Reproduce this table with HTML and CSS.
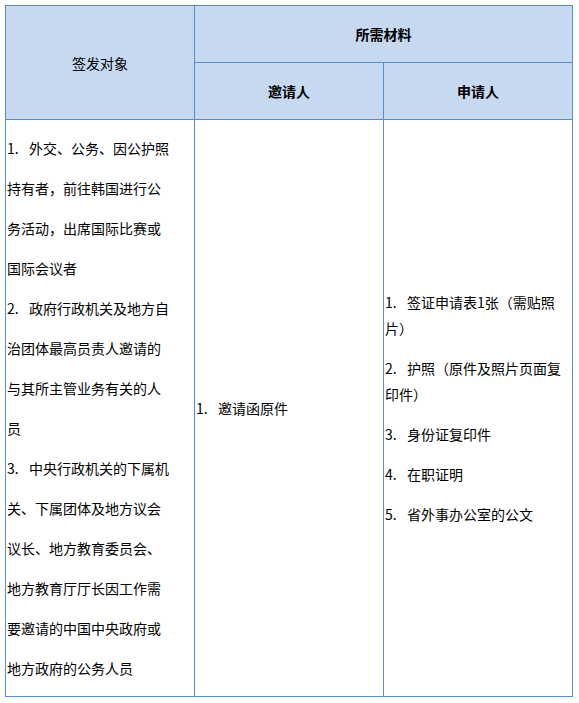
FILE: index.html
```html
<!DOCTYPE html>
<html lang="zh-CN">
<head>
<meta charset="utf-8">
<title>签发对象</title>
<link rel="stylesheet" href="styles.css">
</head>
<body>
<table class="visa">
  <colgroup>
    <col class="c1"><col class="c2"><col class="c3">
  </colgroup>
  <thead>
    <tr class="hrow">
      <th rowspan="2" class="plain">签发对象</th>
      <th colspan="2">所需材料</th>
    </tr>
    <tr class="hrow">
      <th>邀请人</th>
      <th>申请人</th>
    </tr>
  </thead>
  <tbody>
    <tr>
      <td class="left">
        <p><span class="num">1.</span>外交、公务、因公护照</p>
        <p>持有者，前往韩国进行公</p>
        <p>务活动，出席国际比赛或</p>
        <p>国际会议者</p>
        <p><span class="num">2.</span>政府行政机关及地方自</p>
        <p>治团体最高员责人邀请的</p>
        <p>与其所主管业务有关的人</p>
        <p>员</p>
        <p><span class="num">3.</span>中央行政机关的下属机</p>
        <p>关、下属团体及地方议会</p>
        <p>议长、地方教育委员会、</p>
        <p>地方教育厅厅长因工作需</p>
        <p>要邀请的中国中央政府或</p>
        <p>地方政府的公务人员</p>
      </td>
      <td class="mid">
        <p><span class="num">1.</span>邀请函原件</p>
      </td>
      <td class="mid wrap">
        <p><span class="num">1.</span>签证申请表1张（需贴照片）</p>
        <p><span class="num">2.</span>护照（原件及照片页面复印件）</p>
        <p><span class="num">3.</span>身份证复印件</p>
        <p><span class="num">4.</span>在职证明</p>
        <p><span class="num">5.</span>省外事办公室的公文</p>
      </td>
    </tr>
  </tbody>
</table>
</body>
</html>
```
FILE: styles.css
```css
html, body {
  margin: 0;
  padding: 0;
  background: #ffffff;
}
body {
  padding: 5px;
  font-family: "Noto Sans CJK SC", "Noto Sans", sans-serif;
  font-size: 14px;
  color: #000000;
}
.visa {
  border-collapse: collapse;
  width: 568px;
  table-layout: fixed;
}
.visa col { width: 189px; }
.visa th,
.visa td {
  border: 1px solid #548dd4;
  padding: 0 1px;
}
.visa th {
  background: #c6d9f1;
  font-weight: bold;
  text-align: center;
  vertical-align: middle;
  height: 56px;
  line-height: 20px;
}
.visa th.plain { font-weight: normal; }
.visa td {
  vertical-align: middle;
  padding-top: 1px;
  padding-bottom: 1px;
}
.visa p {
  margin: 14px 0;
  line-height: 26px;
}
.left p { white-space: nowrap; }
.wrap { padding-right: 10px; }
.num {
  display: inline-block;
  width: 22px;
}
```
